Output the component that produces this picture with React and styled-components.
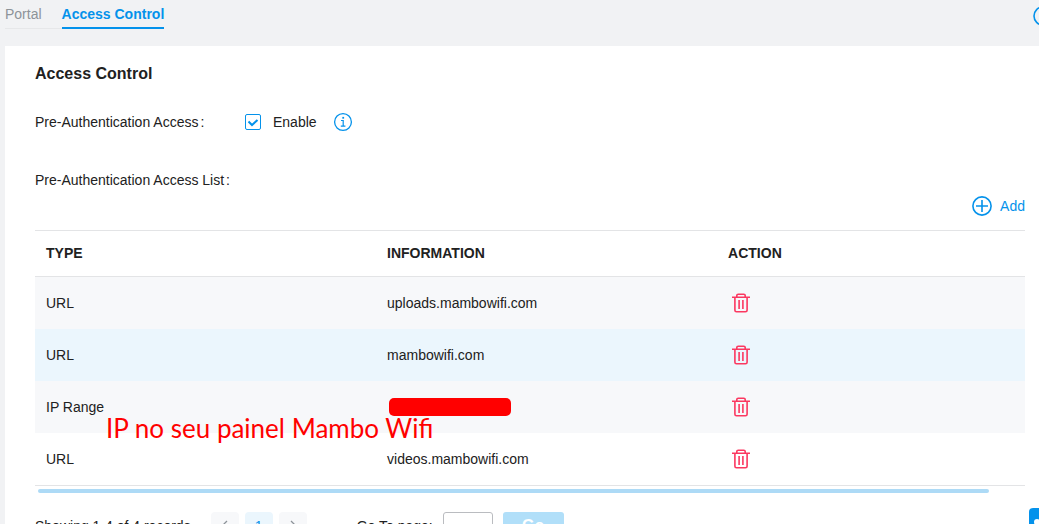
import React, { useState } from "react";
import styled, { createGlobalStyle } from "styled-components";

const GlobalStyle = createGlobalStyle`
  *, *::before, *::after { box-sizing: border-box; }
  body {
    margin: 0;
    background: #f1f2f4;
    color: #212121;
    font: 14px/20px "Liberation Sans", Arial, sans-serif;
  }
  button, input { font: inherit; }
`;

const Page = styled.div`
  position: relative;
  display: flex;
  flex-direction: column;
  height: 100vh;
  overflow: hidden;
  padding-left: 5px;
`;

const TopBar = styled.header`
  display: flex;
  justify-content: space-between;
  align-items: flex-start;
  flex: none;
  height: 46px;
  padding-top: 4px;
`;

const Tabs = styled.nav`
  display: flex;
`;

const Tab = styled.a`
  height: 25px;
  padding-right: ${(p) => (p.$active ? "0" : "20px")};
  border-bottom: ${(p) => (p.$active ? "2px solid #0492eb" : "1px solid #e6e7e9")};
  color: ${(p) => (p.$active ? "#0492eb" : "#8d9399")};
  font-weight: ${(p) => (p.$active ? "bold" : "normal")};
  text-decoration: none;
`;

const IconButton = styled.button`
  display: inline-flex;
  align-items: center;
  gap: 8px;
  padding: 0;
  border: 0;
  background: none;
  color: ${(p) => p.$color || "#0492eb"};
  cursor: pointer;
`;

const HelpButton = styled(IconButton)`
  margin: 2px -14px 0 0;
`;

const TrashButton = styled(IconButton)`
  display: flex;
  margin-left: 4px;
`;

const Card = styled.main`
  flex: none;
  padding: 18px 14px 24px 30px;
  background: #fff;
`;

const Title = styled.h1`
  margin: 0 0 27px;
  font-size: 16px;
  line-height: 20px;
`;

const FormRow = styled.div`
  display: flex;
  align-items: center;
  height: 22px;
`;

const FormLabel = styled.span`
  width: 210px;
`;

const Colon = styled.span`
  margin-left: 2px;

  &::before { content: ":"; }
`;

const CheckLabel = styled.label`
  display: flex;
  align-items: center;
  gap: 12px;
  margin-right: 16px;
`;

const CheckFrame = styled.span`
  display: grid;
  width: 16px;
  height: 16px;

  > * { grid-area: 1 / 1; }
  > svg { pointer-events: none; }
`;

const Checkbox = styled.input`
  appearance: none;
  width: 16px;
  height: 16px;
  margin: 0;
  border: 1px solid #0492eb;
  border-radius: 2px;
  background: #fff;

  &:not(:checked) + svg { visibility: hidden; }
`;

const ListLabel = styled.h2`
  margin: 37px 0 5px;
  font-size: 14px;
  font-weight: normal;
  line-height: 20px;
`;

const Actions = styled.div`
  display: flex;
  justify-content: flex-end;
  height: 35px;
`;

const AddButton = styled(IconButton)`
  height: 22px;
`;

const Table = styled.table`
  width: 100%;
  table-layout: fixed;
  border-collapse: separate;
  border-spacing: 0;
  border-top: 1px solid #e3e4e6;
  border-bottom: 1px solid #e3e4e6;
`;

const HeadCell = styled.th`
  width: ${(p) => p.$width || "auto"};
  height: 46px;
  padding: 0 11px 2px;
  border-bottom: 1px solid #e3e4e6;
  text-align: left;
`;

const Row = styled.tr`
  background: ${(p) => p.$tone};
`;

const Cell = styled.td`
  height: 52px;
  padding: 0 11px;
`;

const Redacted = styled.span`
  display: block;
  width: 122px;
  height: 18px;
  margin-left: 2px;
  border-radius: 5px;
  background: #f00;
`;

const TypeValue = styled.span`
  position: relative;
  display: block;
`;

const Annotation = styled.span`
  position: absolute;
  top: 15px;
  left: 60px;
  color: #f00;
  font: 26px/32px Lato, Carlito, Calibri, sans-serif;
  white-space: nowrap;
`;

const ScrollTrack = styled.div`
  padding: 3px 36px 0 3px;
`;

const ScrollThumb = styled.div`
  height: 4px;
  border-radius: 2px;
  background: #addaf6;
`;

const Footer = styled.footer`
  display: flex;
  align-items: center;
  margin-top: 19px;
`;

const Pager = styled.div`
  display: flex;
  gap: 6px;
  margin: 0 50px 0 20px;
`;

const PageButton = styled.button`
  display: grid;
  place-items: center;
  width: 28px;
  height: 28px;
  padding: 0;
  border: 0;
  border-radius: 4px;
  background: ${(p) => (p.$current ? "#ebf6fd" : "#f7f8fa")};
  color: ${(p) => (p.$current ? "#0492eb" : "#8d9399")};
`;

const GoLabel = styled.label`
  display: flex;
  align-items: center;
  gap: 10px;
`;

const PageInput = styled.input`
  width: 50px;
  height: 28px;
  padding: 0 6px;
  border: 1px solid #babcc0;
  border-radius: 3px;
`;

const GoButton = styled.button`
  width: 61px;
  height: 28px;
  margin-left: 10px;
  padding: 0;
  border: 0;
  border-radius: 3px;
  background: #b1dff9;
  color: #fff;
  font-size: 16px;
  font-weight: bold;
`;

const ChatButton = styled.button`
  position: absolute;
  right: -22px;
  bottom: -16px;
  display: grid;
  place-items: center;
  width: 32px;
  height: 32px;
  padding: 0;
  border: 0;
  border-radius: 4px;
  background: #0492eb;
`;

const stroke = { fill: "none", stroke: "currentColor" };

const CheckIcon = () => (
  <svg width="16" height="16" {...stroke} strokeWidth="2" color="#0492eb">
    <path d="M3.5 7.5 7 11l5.5-5" />
  </svg>
);

const InfoIcon = () => (
  <svg width="20" height="20" {...stroke} viewBox="0 0 20 20">
    <circle cx="10" cy="10" r="8.4" strokeWidth="1.3" />
    <path d="M8 8.5h2.2V14M7.8 14.2h4.6" strokeWidth="1.2" />
    <path d="M9.3 5.8h1.8" strokeWidth="1.8" />
  </svg>
);

const HelpIcon = () => (
  <svg width="20" height="20" {...stroke} strokeWidth="1.6">
    <circle cx="10" cy="10" r="9" />
    <path d="M7.5 8a2.5 2.5 0 1 1 2.5 2.7V12M10 13.5V15" />
  </svg>
);

const PlusIcon = () => (
  <svg width="20" height="20" {...stroke} strokeWidth="1.6">
    <circle cx="10" cy="10" r="9.1" />
    <path d="M4 10h12M10 4v12" />
  </svg>
);

const TrashIcon = () => (
  <svg width="18" height="20" {...stroke} strokeWidth="1.6">
    <path d="M0 4.3h18M2.9 4.5V17.2a1.6 1.6 0 0 0 1.6 1.6h9a1.6 1.6 0 0 0 1.6-1.6V4.5M4.8 4V2.6A1.4 1.4 0 0 1 6.2 1.2h5.6a1.4 1.4 0 0 1 1.4 1.4V4M7.1 7v9M10.9 7v9" />
  </svg>
);

const Chevron = ({ d }) => (
  <svg width="12" height="12" {...stroke} strokeWidth="1.3">
    <path d={d} />
  </svg>
);

const ENTRIES = [
  { type: "URL", info: "uploads.mambowifi.com", tone: "#f7f8fa" },
  { type: "URL", info: "mambowifi.com", tone: "#ebf6fd" },
  { type: "IP Range", note: "IP no seu painel Mambo Wifi", tone: "#f7f8fa" },
  { type: "URL", info: "videos.mambowifi.com", tone: "#fff" },
];

export default function App() {
  const [enabled, setEnabled] = useState(true);
  return (
    <>
      <GlobalStyle />
      <Page>
        <TopBar>
          <Tabs>
            <Tab href="#portal">Portal</Tab>
            <Tab href="#access" $active>Access Control</Tab>
          </Tabs>
          <HelpButton aria-label="Help"><HelpIcon /></HelpButton>
        </TopBar>
        <Card>
          <Title>Access Control</Title>
          <FormRow>
            <FormLabel>Pre-Authentication Access<Colon /></FormLabel>
            <CheckLabel>
              <CheckFrame>
                <Checkbox
                  type="checkbox"
                  checked={enabled}
                  onChange={(e) => setEnabled(e.target.checked)}
                />
                <CheckIcon />
              </CheckFrame>
              Enable
            </CheckLabel>
            <IconButton aria-label="Information"><InfoIcon /></IconButton>
          </FormRow>
          <ListLabel>Pre-Authentication Access List<Colon /></ListLabel>
          <Actions>
            <AddButton><PlusIcon />Add</AddButton>
          </Actions>
          <Table>
            <thead>
              <tr>
                <HeadCell $width="34.45%">TYPE</HeadCell>
                <HeadCell $width="34.45%">INFORMATION</HeadCell>
                <HeadCell>ACTION</HeadCell>
              </tr>
            </thead>
            <tbody>
              {ENTRIES.map((entry, i) => (
                <Row key={i} $tone={entry.tone}>
                  <Cell>
                    <TypeValue>
                      {entry.type}
                      {entry.note && <Annotation>{entry.note}</Annotation>}
                    </TypeValue>
                  </Cell>
                  <Cell>{entry.info || <Redacted />}</Cell>
                  <Cell>
                    <TrashButton aria-label="Delete" $color="#fb3860">
                      <TrashIcon />
                    </TrashButton>
                  </Cell>
                </Row>
              ))}
            </tbody>
          </Table>
          <ScrollTrack><ScrollThumb /></ScrollTrack>
          <Footer>
            <span>Showing 1-4 of 4 records</span>
            <Pager>
              <PageButton aria-label="Previous page"><Chevron d="M8 1 3 6l5 5" /></PageButton>
              <PageButton $current>1</PageButton>
              <PageButton aria-label="Next page"><Chevron d="m4 1 5 5-5 5" /></PageButton>
            </Pager>
            <GoLabel>Go To page:<PageInput type="text" /></GoLabel>
            <GoButton>Go</GoButton>
          </Footer>
        </Card>
        <ChatButton aria-label="Chat">
          <svg width="24" height="24" fill="#fff">
            <circle cx="4" cy="10" r="3" />
            <circle cx="12" cy="10" r="3" />
            <circle cx="20" cy="10" r="3" />
          </svg>
        </ChatButton>
      </Page>
    </>
  );
}
